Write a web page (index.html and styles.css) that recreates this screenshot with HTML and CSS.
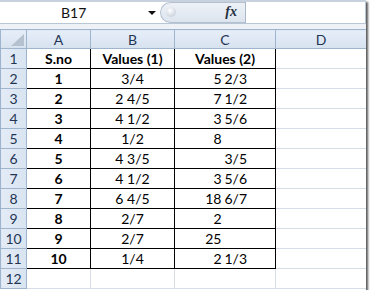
FILE: index.html
```html
<!DOCTYPE html>
<html lang="en">
<head>
    <meta charset="UTF-8">
    <link rel="stylesheet" href="styles.css">
    <title>Fractions</title>
</head>
<body>
    <div class="sheet">
        <div class="formula-bar">
            <div class="name-box">
                <span class="cell-ref">B17</span>
                <span class="drop"></span>
            </div>
            <div class="fx-btn">
                <span class="knob"></span>
                <span class="fx">fx</span>
            </div>
            <div class="formula-input"></div>
        </div>
        <div class="gap"></div>

        <table class="grid">
            <colgroup>
                <col class="c-head">
                <col class="c-a">
                <col class="c-b">
                <col class="c-c">
                <col class="c-d">
            </colgroup>
            <tr class="col-heads">
                <th class="corner"><span class="tri"></span></th>
                <th>A</th>
                <th>B</th>
                <th>C</th>
                <th>D</th>
            </tr>
            <tr>
                <th class="row-head">1</th>
                <td class="box bold">S.no</td>
                <td class="box bold">Values (1)</td>
                <td class="box bold">Values (2)</td>
                <td></td>
            </tr>
            <tr>
                <th class="row-head">2</th>
                <td class="box bold">1</td>
                <td class="box">3/4</td>
                <td class="box"><span class="whole">5</span><span class="frac">2/3</span></td>
                <td></td>
            </tr>
            <tr>
                <th class="row-head">3</th>
                <td class="box bold">2</td>
                <td class="box">2 4/5</td>
                <td class="box"><span class="whole">7</span><span class="frac">1/2</span></td>
                <td></td>
            </tr>
            <tr>
                <th class="row-head">4</th>
                <td class="box bold">3</td>
                <td class="box">4 1/2</td>
                <td class="box"><span class="whole">3</span><span class="frac">5/6</span></td>
                <td></td>
            </tr>
            <tr>
                <th class="row-head">5</th>
                <td class="box bold">4</td>
                <td class="box">1/2</td>
                <td class="box"><span class="whole">8</span><span class="frac"></span></td>
                <td></td>
            </tr>
            <tr>
                <th class="row-head">6</th>
                <td class="box bold">5</td>
                <td class="box">4 3/5</td>
                <td class="box"><span class="whole"></span><span class="frac">3/5</span></td>
                <td></td>
            </tr>
            <tr>
                <th class="row-head">7</th>
                <td class="box bold">6</td>
                <td class="box">4 1/2</td>
                <td class="box"><span class="whole">3</span><span class="frac">5/6</span></td>
                <td></td>
            </tr>
            <tr>
                <th class="row-head">8</th>
                <td class="box bold">7</td>
                <td class="box">6 4/5</td>
                <td class="box"><span class="whole">18</span><span class="frac">6/7</span></td>
                <td></td>
            </tr>
            <tr>
                <th class="row-head">9</th>
                <td class="box bold">8</td>
                <td class="box">2/7</td>
                <td class="box"><span class="whole">2</span><span class="frac"></span></td>
                <td></td>
            </tr>
            <tr>
                <th class="row-head">10</th>
                <td class="box bold">9</td>
                <td class="box">2/7</td>
                <td class="box"><span class="whole">25</span><span class="frac"></span></td>
                <td></td>
            </tr>
            <tr>
                <th class="row-head">11</th>
                <td class="box bold">10</td>
                <td class="box">1/4</td>
                <td class="box"><span class="whole">2</span><span class="frac">1/3</span></td>
                <td></td>
            </tr>
            <tr>
                <th class="row-head">12</th>
                <td></td>
                <td></td>
                <td></td>
                <td></td>
            </tr>
        </table>
    </div>
</body>
</html>
```

FILE: styles.css
```css
body {
    margin: 0;
    background-color: #ffffff;
    font-family: Lato, "Liberation Sans", sans-serif;
}

.sheet {
    width: 366px;
    height: 290px;
    overflow: hidden;
    background-color: #ffffff;
    box-shadow: 2px 2px 2px rgba(0, 0, 0, 0.65);
}

/* formula bar */

.formula-bar {
    display: flex;
    height: 21px;
    border-top: 2px solid #c8d2de;
    border-bottom: 1px solid #b9c6d5;
}

.name-box {
    position: relative;
    width: 160px;
    background-color: #ffffff;
    font-size: 14px;
    color: #111111;
    line-height: 21px;
}

.cell-ref {
    position: absolute;
    left: 61px;
}

.drop {
    position: absolute;
    left: 148px;
    top: 9px;
    width: 0;
    height: 0;
    border-left: 4px solid transparent;
    border-right: 4px solid transparent;
    border-top: 4px solid #111111;
}

.fx-btn {
    position: relative;
    width: 85px;
    background: linear-gradient(#eef2f7, #dce4ee);
    border: 1px solid #b3c0cf;
    border-right: none;
    border-radius: 11px 0 0 11px;
    box-sizing: border-box;
}

.knob {
    position: absolute;
    left: 5px;
    top: 4px;
    width: 10px;
    height: 10px;
    border-radius: 50%;
    background: radial-gradient(circle at 40% 35%, #ffffff, #b8c3d0);
}

.fx {
    position: absolute;
    right: 8px;
    top: 1px;
    font-family: "Liberation Serif", serif;
    font-style: italic;
    font-weight: bold;
    font-size: 14px;
    color: #22313f;
}

.formula-input {
    flex: 1;
    background-color: #ffffff;
    border-left: 1px solid #a9b8c9;
    border-right: 1px solid #b9c6d5;
}

.gap {
    height: 5px;
    background-color: #eef2f7;
}

/* grid */

.grid {
    table-layout: fixed;
    border-collapse: collapse;
    width: 366px;
    font-size: 14px;
}

.c-head { width: 26px; }
.c-a { width: 64px; }
.c-b { width: 84px; }
.c-c { width: 101px; }
.c-d { width: 91px; }

.grid th,
.grid td {
    padding: 0;
    height: 19px;
    border: 1px solid #d7dde6;
    text-align: center;
    white-space: nowrap;
    overflow: hidden;
}

.col-heads th {
    height: 18px;
    background: linear-gradient(#e6eef8, #d7e2f0);
    border: 1px solid #9fb5cd;
    font-weight: normal;
    font-size: 14px;
    color: #1f3554;
}

.grid th.row-head {
    background: linear-gradient(90deg, #e3ebf6, #d9e4f1);
    border: 1px solid #9fb5cd;
    font-weight: normal;
    font-size: 14px;
    color: #1f3554;
}

.corner {
    position: relative;
}

.tri {
    position: absolute;
    right: 2px;
    bottom: 2px;
    width: 13px;
    height: 12px;
    background-color: #b6c1cf;
    clip-path: polygon(100% 0, 100% 100%, 0 100%);
}

.grid td.box {
    border: 1px solid #000000;
    color: #000000;
}

.bold {
    font-weight: bold;
}

.whole {
    display: inline-block;
    width: 22px;
    text-align: right;
}

.frac {
    display: inline-block;
    width: 26px;
    margin-left: 3px;
    text-align: left;
}
```
